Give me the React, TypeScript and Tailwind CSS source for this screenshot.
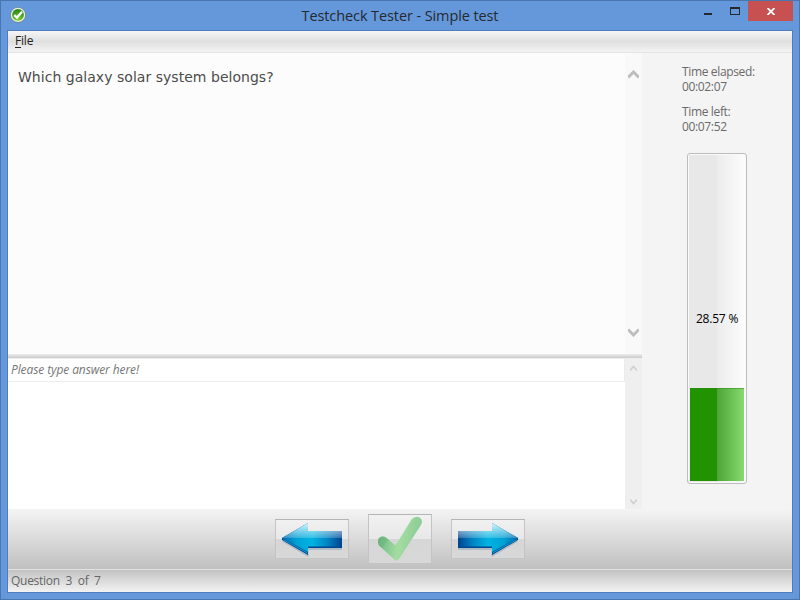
import React from 'react';

const UI_FONT = "font-['Open_Sans','Noto_Sans',sans-serif]";

function AppIcon() {
  return (
    <svg width="16" height="16" viewBox="0 0 16 16">
      <defs>
        <radialGradient id="appFill" cx="0.5" cy="0.9" r="0.8">
          <stop offset="0" stopColor="#7fd52c" />
          <stop offset="1" stopColor="#2b8a18" />
        </radialGradient>
      </defs>
      <circle cx="8" cy="8" r="7.8" fill="#6c8a80" />
      <circle cx="8" cy="7.9" r="7.2" fill="#e9eee8" />
      <circle cx="8" cy="7.9" r="5.9" fill="url(#appFill)" />
      <path d="M4.2 8.1 L7 10.6 L12 4.7" fill="none" stroke="#fff" strokeWidth="2.3" />
    </svg>
  );
}

function ArrowIcon({ flip = false }: { flip?: boolean }) {
  const id = flip ? 'arrowRight' : 'arrowLeft';
  return (
    <svg width="62" height="36" viewBox="0 0 62 36" className={flip ? '-scale-x-100' : ''}>
      <defs>
        <linearGradient id={id + 'Body'} x1="1" x2="61" y1="0" y2="0" gradientUnits="userSpaceOnUse">
          <stop offset="0" stopColor="#0068b0" />
          <stop offset="0.25" stopColor="#00a2d6" />
          <stop offset="0.5" stopColor="#00b4e2" />
          <stop offset="0.75" stopColor="#0085c4" />
          <stop offset="1" stopColor="#00438f" />
        </linearGradient>
        <linearGradient id={id + 'Gloss'} x1="0" x2="0" y1="2" y2="17" gradientUnits="userSpaceOnUse">
          <stop offset="0" stopColor="#fff" stopOpacity="0.85" />
          <stop offset="0.6" stopColor="#fff" stopOpacity="0.45" />
          <stop offset="1" stopColor="#fff" stopOpacity="0.2" />
        </linearGradient>
        <clipPath id={id + 'Top'}>
          <rect width="62" height="17" />
        </clipPath>
      </defs>
      <path d="M2 20 L26.5 34.5 V28 H61" fill="none" stroke="#527f9d" strokeOpacity="0.3" strokeWidth="2" />
      <path d="M1 17 L27 2 V10 H61 V27 H27 V34 L1 19Z" fill="#004791" />
      <path d="M1 17 L27 2 V10 H61 V24 H27 V31Z" fill={'url(#' + id + 'Body)'} />
      <path d="M2 18.5 L26.5 32" fill="none" stroke="#13b7e6" strokeWidth="0.8" />
      <path d="M27 24 H61 V25.5 H27Z" fill={'url(#' + id + 'Body)'} />
      <path
        d="M1 17 L27 2 V10 H61 V24 H27 V31Z"
        fill={'url(#' + id + 'Gloss)'}
        clipPath={'url(#' + id + 'Top)'}
      />
    </svg>
  );
}

function CheckIcon() {
  return (
    <svg width="46" height="46" viewBox="0 0 46 46">
      <defs>
        <linearGradient id="checkFill" x1="2" y1="22" x2="42" y2="28" gradientUnits="userSpaceOnUse">
          <stop offset="0" stopColor="#72b983" />
          <stop offset="0.5" stopColor="#a3dda2" />
          <stop offset="1" stopColor="#8ccb95" />
        </linearGradient>
      </defs>
      <path
        d="M18 44 L2 29.5 Q0 25 2 22 Q5.5 19.5 9 21.5 L18.5 29.5 L34.5 3.5 Q38 -0.5 42.5 1.5 Q46.5 4 44 9 L22 43 Q20 45.5 18 44Z"
        fill="url(#checkFill)"
      />
      <path d="M2 22 Q5.5 19.5 9 21.5 L11.5 24 L5 32 L2 29.5 Q0 25 2 22Z" fill="#5cad70" fillOpacity="0.35" />
    </svg>
  );
}

function Chevron({ down = false, small = false }: { down?: boolean; small?: boolean }) {
  return (
    <svg
      width={small ? 7 : 11}
      height={small ? 7 : 9}
      viewBox={small ? '0 0 7 7' : '0 0 11 9'}
      className={down ? '-scale-y-100' : ''}
    >
      {small ? (
        <path d="M0 5.5 L3.5 1.5 L7 5.5" fill="none" stroke="#cfcfcf" strokeWidth="1.5" />
      ) : (
        <path d="M0 7.5 L5.5 2 L11 7.5" fill="none" stroke="#bebebe" strokeWidth="3" />
      )}
    </svg>
  );
}

function GlossButton({ className, children }: { className: string; children: React.ReactNode }) {
  return (
    <button
      className={
        'flex items-center justify-center border border-[#c4c4c4] border-t-[#b5b5b5] bg-[linear-gradient(#f1f1f1_0%,#e8e8e8_50%,#d6d6d6_50%,#d8d8d8_100%)] ' +
        className
      }
    >
      {children}
    </button>
  );
}

export default function App() {
  return (
    <div
      className={
        'flex h-[600px] w-[800px] flex-col overflow-hidden border border-[#4a76af] bg-[#6498da] px-[6px] pb-[6px] ' +
        UI_FONT
      }
    >
      <header className="relative flex h-[29px] shrink-0 items-center justify-center text-[#252a31]">
        <div className="absolute top-[6px] left-[3px]">
          <AppIcon />
        </div>
        <h1 className="mt-[1px] text-[14.5px] tracking-[-0.1px] whitespace-nowrap">Testcheck Tester - Simple test</h1>
        <div className="absolute top-0 right-0 flex h-[20px]">
          <svg width="44" height="20" viewBox="0 0 44 20">
            <rect x="0" y="12" width="8" height="2" fill="#25282c" />
            <path d="M26 6h10v8H26z M27 8v5h8V8z" fillRule="evenodd" fill="#25282c" />
          </svg>
          <div className="flex w-[45px] items-center justify-center bg-[#c75050]">
            <svg width="8" height="7" viewBox="0 0 8 7">
              <path d="M0.5 0 L7.5 7 M7.5 0 L0.5 7" stroke="#fff" strokeWidth="1.8" />
            </svg>
          </div>
        </div>
      </header>

      <div className="flex min-h-0 flex-1 flex-col border border-[#4f7dbb]">
        <nav className="flex h-[22px] shrink-0 items-center border-b border-[#e4e4e4] bg-[linear-gradient(#f6f6f6,#dfdfdf_50%,#f3f3f3)] px-[7px] pb-[1px] text-[12px] leading-4 tracking-[-0.2px] text-[#222]">
          <span>
            <span className="underline underline-offset-2">F</span>ile
          </span>
        </nav>

        <main className="flex h-[456px] shrink-0">
          <div className="flex w-[634px] shrink-0 flex-col">
            <section className="flex h-[301px] bg-[#fcfcfc]">
              <p className="flex-1 pt-[14px] pl-[10px] font-['DejaVu_Sans',sans-serif] text-[14px] leading-5 tracking-[0.03px] text-[#4c4c4c]">
                Which galaxy solar system belongs?
              </p>
              <div className="flex w-[17px] flex-col items-center justify-between bg-[#f9f9f9] pt-[17px] pb-[17px]">
                <Chevron />
                <Chevron down />
              </div>
            </section>
            <div className="h-[5px] bg-[linear-gradient(#ededed,#cbcbcb_80%,#eeeeee_80%)]" />
            <section className="flex h-[150px] bg-white">
              <div className="flex-1">
                <div className="h-[23px] border-r border-b border-[#ececec] pt-[3px] pl-[3px] text-[12px] leading-4 tracking-[-0.1px] text-[#777] italic">
                  Please type answer here!
                </div>
              </div>
              <div className="flex w-[17px] flex-col items-center justify-between bg-[#efefef] pt-[6px] pb-[4px]">
                <Chevron small />
                <Chevron small down />
              </div>
            </section>
          </div>

          <aside className="flex-1 bg-[#f4f4f4] pt-[11px] pl-[40px] text-[12px] leading-[15px] text-[#6a6a6a]">
            <p className="tracking-[-0.35px]">
              Time elapsed:
              <br />
              00:02:07
            </p>
            <p className="mt-[10px] tracking-[-0.35px]">
              Time left:
              <br />
              00:07:52
            </p>
            <div className="mt-[19px] ml-[5px] flex h-[331px] w-[60px] rounded-[3px] border border-[#bcbcbc] bg-[#fafafa] p-[1px]">
              <div className="relative flex flex-1 flex-col justify-end bg-[linear-gradient(to_right,#e8e8e8_50%,#ececec_50%,#fcfcfc)]">
                <div className="mx-[1px] mb-[1px] h-[93px] border-t border-[#2d870f]/50 bg-[linear-gradient(to_right,#219200_50%,#4ea437_50%,#86da70)]" />
                <span className="absolute top-[156px] left-0 w-full text-center tracking-[-0.2px] whitespace-nowrap text-black">
                  28.57 %
                </span>
              </div>
            </div>
          </aside>
        </main>

        <footer className="flex h-[60px] shrink-0 items-center justify-center gap-[19px] bg-[linear-gradient(#f4f4f4,#c0c0c0)]">
          <GlossButton className="h-[40px] w-[74px]">
            <ArrowIcon />
          </GlossButton>
          <GlossButton className="h-[50px] w-[64px]">
            <CheckIcon />
          </GlossButton>
          <GlossButton className="h-[40px] w-[74px]">
            <ArrowIcon flip />
          </GlossButton>
        </footer>
        <div className="h-[23px] border-t border-[#e2e2e2] bg-[linear-gradient(#c2c2c2,#f3f3f3)] pt-[3px] pl-[3px] text-[12px] leading-4 tracking-[-0.28px] text-[#666]">
          <span className="whitespace-pre">Question  3  of  7</span>
        </div>
      </div>
    </div>
  );
}
